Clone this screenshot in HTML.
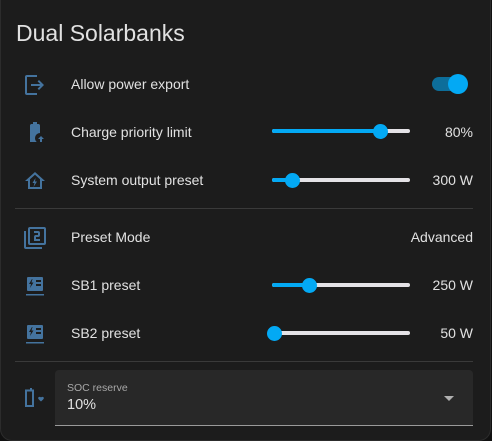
<!DOCTYPE html>
<html><head><style>
*{box-sizing:border-box;margin:0;padding:0}
body{width:492px;height:441px;background:#111;font-family:"Liberation Sans",Roboto,sans-serif;overflow:hidden}
.card{position:absolute;left:0;top:-12px;width:491px;height:453px;background:#1c1c1c;border:1px solid #2c2c2c;border-radius:12px}
.t{position:absolute;color:#e1e1e1;font-size:14px}
.h{position:absolute;left:16px;top:20px;font-size:23px;color:#e1e1e1}
.ic{position:absolute;left:23px}
.tr{position:absolute;left:272px;width:138px;height:4px;border-radius:2px;background:#e4e2e6}
.fill{position:absolute;left:0;top:0;height:4px;border-radius:2px;background:#03a9f4}
.th{position:absolute;width:15px;height:15px;border-radius:50%;background:#03a9f4;top:-5.5px}
.v{position:absolute;right:19px;color:#e1e1e1;font-size:14px;text-align:right}
.div{position:absolute;left:15px;width:458px;height:1px;background:#3a3a3a}
</style></head><body>
<div class="card"></div>
<div class="h">Dual Solarbanks</div>

<svg class="ic" style="top:73px" width="24" height="24" viewBox="0 0 24 24" fill="#44739e"><path d="M14 2H4a2 2 0 0 0-2 2v16a2 2 0 0 0 2 2h10v-2H4V4h10V2zm2 5-1.4 1.4 2.6 2.6H8v2h9.2l-2.6 2.6L16 17l5-5-5-5z"/></svg>
<div class="t" style="left:71px;top:76px">Allow power export</div>
<div style="position:absolute;left:432px;top:77px;width:28px;height:14px;border-radius:7px;background:#0d6e9a"></div>
<div style="position:absolute;left:448px;top:74px;width:20px;height:20px;border-radius:50%;background:#03a9f4"></div>

<svg class="ic" style="top:120px" width="24" height="24" viewBox="0 0 24 24" fill="#44739e"><path d="M7 22V5.5C7 4.7 7.7 4 8.5 4H10V2h4v2h1.5c.8 0 1.5.7 1.5 1.5V13a5 5 0 0 0-5 5c0 1.5.6 3 1.7 4H7zm11-6-3 3h2v3h2v-3h2l-3-3z"/></svg>
<div class="t" style="left:71px;top:124px">Charge priority limit</div>
<div class="tr" style="top:129px"><div class="fill" style="width:109px"></div><div class="th" style="left:101px"></div></div>
<div class="v" style="top:124px">80%</div>

<svg class="ic" style="top:169px" width="24" height="24" viewBox="0 0 24 24" fill="#44739e"><path d="M12 3 2 12h3v8h14v-8h3L12 3zm-5 7.2 5-4.5 5 4.5V18H7v-7.8zM12.5 9 9.5 14h2l-1 4 3.5-5.5h-2l.5-3.5z"/></svg>
<div class="t" style="left:71px;top:172px">System output preset</div>
<div class="tr" style="top:178px"><div class="fill" style="width:20px"></div><div class="th" style="left:13px"></div></div>
<div class="v" style="top:172px">300 W</div>

<div class="div" style="top:208px"></div>

<svg class="ic" style="top:226px" width="24" height="24" viewBox="0 0 24 24" fill="#44739e"><path d="M3 5H1v16a2 2 0 0 0 2 2h16v-2H3V5zm18-4H7a2 2 0 0 0-2 2v14a2 2 0 0 0 2 2h14a2 2 0 0 0 2-2V3a2 2 0 0 0-2-2zm0 16H7V3h14v14zm-4-4h-4v-2h2a2 2 0 0 0 2-2V7a2 2 0 0 0-2-2h-4v2h4v2h-2a2 2 0 0 0-2 2v4h6v-2z"/></svg>
<div class="t" style="left:71px;top:229px">Preset Mode</div>
<div class="v" style="top:229px">Advanced</div>

<svg class="ic" style="top:274px" width="24" height="24" viewBox="0 0 24 24" fill="#44739e"><path d="M5 3h14a1 1 0 0 1 1 1v12a1 1 0 0 1-1 1H5a1 1 0 0 1-1-1V4a1 1 0 0 1 1-1zm4 2-3 5h2l-1 4 3.5-5.5h-2L9.5 5H9zm4 1v2h5V6h-5zm0 4v2h5v-2h-5zM3 20h18v1.5H3z"/></svg>
<div class="t" style="left:71px;top:277px">SB1 preset</div>
<div class="tr" style="top:283px"><div class="fill" style="width:38px"></div><div class="th" style="left:30px"></div></div>
<div class="v" style="top:277px">250 W</div>

<svg class="ic" style="top:322px" width="24" height="24" viewBox="0 0 24 24" fill="#44739e"><path d="M5 3h14a1 1 0 0 1 1 1v12a1 1 0 0 1-1 1H5a1 1 0 0 1-1-1V4a1 1 0 0 1 1-1zm4 2-3 5h2l-1 4 3.5-5.5h-2L9.5 5H9zm4 1v2h5V6h-5zm0 4v2h5v-2h-5zM3 20h18v1.5H3z"/></svg>
<div class="t" style="left:71px;top:325px">SB2 preset</div>
<div class="tr" style="top:331px"><div class="th" style="left:-5px"></div></div>
<div class="v" style="top:325px">50 W</div>

<div class="div" style="top:361px"></div>

<svg class="ic" style="top:386px" width="24" height="24" viewBox="0 0 24 24" fill="#44739e"><path d="M4 3.5h3V2h2v1.5h2V21H2V3.5h2zm0 2V19h5V5.5H4zM18 11.5c.6-.9 2.5-.9 2.8.3.3 1-1 2.2-2.8 3.7-1.8-1.5-3.1-2.7-2.8-3.7.3-1.2 2.2-1.2 2.8-.3z"/></svg>
<div style="position:absolute;left:55px;top:370px;width:418px;height:56px;background:#282828;border-radius:4px 4px 0 0;border-bottom:1px solid #9a9a9a"></div>
<div style="position:absolute;left:67px;top:382px;font-size:10.5px;color:#a8a8a8">SOC reserve</div>
<div style="position:absolute;left:67px;top:397px;font-size:14.5px;color:#e1e1e1">10%</div>
<div style="position:absolute;left:444px;top:396px;width:0;height:0;border-left:5px solid transparent;border-right:5px solid transparent;border-top:5px solid #b0b0b0"></div>
</body></html>
